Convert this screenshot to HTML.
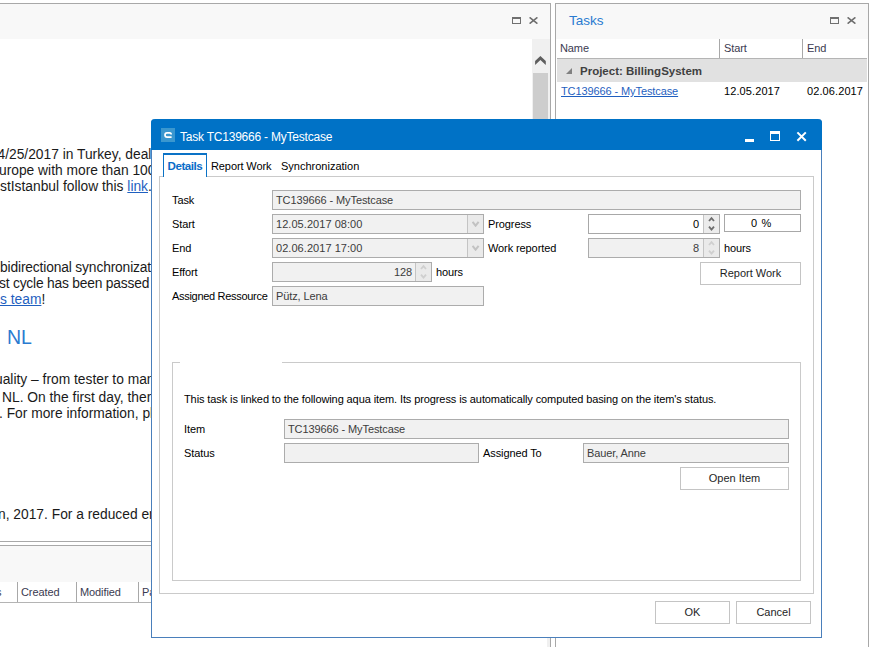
<!DOCTYPE html>
<html><head><meta charset="utf-8">
<style>
*{margin:0;padding:0;box-sizing:border-box}
html,body{width:870px;height:647px;overflow:hidden;background:#fff;font-family:"Liberation Sans",sans-serif;color:#1e1e1e}
.a{position:absolute}
.t{position:absolute;white-space:nowrap;line-height:1}
.doc{font-size:13.8px;color:#1a1a1a}

.sm{font-size:11px;letter-spacing:-0.1px;color:#000}
.v{color:#3c3c3c}
.lnk{color:#1f5fbf;text-decoration:underline}
.box{position:absolute;background:#f1f1f1;border:1px solid #acacac}
.btn{position:absolute;background:#fff;border:1px solid #c4c4c4;font-size:11px;text-align:center;line-height:21px;color:#1e1e1e}
</style></head><body>

<!-- ===== left document pane ===== -->
<div class="a" style="left:0;top:3px;width:551px;height:1px;background:#a8a8a8"></div>
<div class="a" style="left:0;top:4px;width:550px;height:35px;background:#f8f8f8"></div>
<div class="a" style="left:550px;top:3px;width:1px;height:644px;background:#a8a8a8"></div>
<!-- pane icons -->
<div class="a" style="left:512px;top:17px;width:9px;height:7px;border:1px solid #707070;border-top-width:2px"></div>
<svg class="a" style="left:529px;top:17px" width="9" height="7" viewBox="0 0 9 7"><path d="M0.6 0.3L8.4 6.7M8.4 0.3L0.6 6.7" stroke="#6e6e6e" stroke-width="1.5"/></svg>
<!-- scrollbar -->
<div class="a" style="left:532px;top:39px;width:18px;height:502px;background:#f0f0f0"></div>
<div class="a" style="left:533px;top:73px;width:15px;height:468px;background:#cdcdcd"></div>
<svg class="a" style="left:534px;top:55px" width="13" height="11" viewBox="0 0 13 11"><path d="M1.1 6.1L6.4 0.9L11.8 6.1L11.8 10L6.4 5.1L1.1 10Z" fill="#5e5e5e"/></svg>

<div class="t doc" style="left:-2.5px;top:148px">4/25/2017 in Turkey, dealing</div>
<div class="t doc" style="left:-1px;top:164px">urope with more than 100</div>
<div class="t doc" style="left:0px;top:180px">stIstanbul follow this <span class="lnk">link</span>.</div>
<div class="t doc" style="left:0px;top:260.5px;letter-spacing:-0.15px">bidirectional synchronization</div>
<div class="t doc" style="left:-1px;top:277px;letter-spacing:-0.2px">st cycle has been passed</div>
<div class="t doc" style="left:0px;top:293px"><span class="lnk">s team</span>!</div>
<div class="t" style="left:7px;top:328px;font-size:19.5px;color:#2a7bd0">NL</div>
<div class="t doc" style="left:-5px;top:373px">uality – from tester to management</div>
<div class="t doc" style="left:2px;top:391px">NL. On the first day, there</div>
<div class="t doc" style="left:-1px;top:407px">. For more information, please</div>
<div class="t doc" style="left:-2px;top:508px">n, 2017. For a reduced entry</div>

<!-- bottom grid in left pane -->
<div class="a" style="left:547px;top:546px;width:3px;height:101px;background:#f0f0f0"></div>
<div class="a" style="left:0;top:541px;width:550px;height:1px;background:#a8a8a8"></div>
<div class="a" style="left:0;top:545px;width:550px;height:1px;background:#a8a8a8"></div>
<div class="a" style="left:0;top:546px;width:550px;height:36px;background:#f8f8f8"></div>
<div class="a" style="left:0;top:602px;width:550px;height:1px;background:#b4b4b4"></div>
<div class="a" style="left:17px;top:582px;width:1px;height:20px;background:#a8a8a8"></div>
<div class="a" style="left:76px;top:582px;width:1px;height:20px;background:#a8a8a8"></div>
<div class="a" style="left:138px;top:582px;width:1px;height:20px;background:#a8a8a8"></div>
<div class="t sm" style="left:-4px;top:587px;color:#3a3a50">s</div>
<div class="t sm" style="left:21px;top:587px;color:#3a3a50">Created</div>
<div class="t sm" style="left:80px;top:587px;color:#3a3a50">Modified</div>
<div class="t sm" style="left:142px;top:587px;color:#3a3a50">Pa</div>

<!-- ===== right tasks pane ===== -->
<div class="a" style="left:555px;top:3px;width:314px;height:644px;border:1px solid #a8a8a8;border-bottom:none;background:#fff"></div>
<div class="a" style="left:556px;top:4px;width:312px;height:35px;background:#f8f8f8"></div>
<div class="t" style="left:569px;top:14px;font-size:13.5px;color:#2a7bd0">Tasks</div>
<div class="a" style="left:830px;top:17px;width:9px;height:7px;border:1px solid #707070;border-top-width:2px"></div>
<svg class="a" style="left:847px;top:17px" width="9" height="7" viewBox="0 0 9 7"><path d="M0.6 0.3L8.4 6.7M8.4 0.3L0.6 6.7" stroke="#6e6e6e" stroke-width="1.5"/></svg>
<div class="a" style="left:557px;top:58px;width:310px;height:1px;background:#b4b4b4"></div>
<div class="a" style="left:719px;top:39px;width:1px;height:19px;background:#a8a8a8"></div>
<div class="a" style="left:802px;top:39px;width:1px;height:19px;background:#a8a8a8"></div>
<div class="t sm" style="left:560px;top:43px;color:#3a3a50">Name</div>
<div class="t sm" style="left:724px;top:43px;color:#3a3a50">Start</div>
<div class="t sm" style="left:807px;top:43px;color:#3a3a50">End</div>
<div class="a" style="left:557px;top:59px;width:310px;height:23px;background:#e1e1e1"></div>
<svg class="a" style="left:565px;top:67px" width="8" height="8" viewBox="0 0 8 8"><path d="M7 1L7 7L1 7Z" fill="#808080"/></svg>
<div class="t" style="left:580px;top:66px;font-size:11.5px;font-weight:bold;color:#404040">Project: BillingSystem</div>
<div class="t sm lnk" style="left:561px;top:86px">TC139666 - MyTestcase</div>
<div class="t sm" style="left:724px;top:86px;letter-spacing:0.1px">12.05.2017</div>
<div class="t sm" style="left:807px;top:86px;letter-spacing:0.1px">02.06.2017</div>

<!-- ===== dialog ===== -->
<div class="a" id="dlg" style="left:151px;top:119px;width:671px;height:519px;border:1px solid #4a7fbb;border-top:none;background:#fff;border-radius:4px 4px 0 0">
</div>
<div class="a" style="left:151px;top:119px;width:671px;height:31px;background:#0072c6;border-radius:4px 4px 0 0"></div>
<div class="a" style="left:161px;top:128px;width:14px;height:14px;background:#3a97cf"></div>
<svg class="a" style="left:161px;top:128px" width="14" height="14" viewBox="0 0 14 14"><path d="M10.2 6.6Q10.2 4.9 8.6 4.9H6.1Q4 4.9 4 7Q4 9.1 6.1 9.1H10.6" stroke="#fff" stroke-width="1.7" fill="none"/></svg>
<div class="t" style="left:180px;top:131px;font-size:12px;letter-spacing:-0.22px;color:#fff">Task TC139666 - MyTestcase</div>
<div class="a" style="left:745px;top:138.5px;width:9px;height:3px;background:#fff"></div>
<div class="a" style="left:770px;top:131px;width:10px;height:10px;border:1.5px solid #fff;border-top-width:3px"></div>
<svg class="a" style="left:796px;top:131px" width="11" height="11" viewBox="0 0 11 11"><path d="M1.4 1.4L9.8 9.8M9.8 1.4L1.4 9.8" stroke="#fff" stroke-width="2"/></svg>

<!-- tabs -->
<div class="a" style="left:159px;top:176px;width:655px;height:418px;border:1px solid #cacaca"></div>
<div class="a" style="left:163px;top:153px;width:44px;height:24px;border:1px solid #0a72c6;border-top:2px solid #0a72c6;border-bottom:none;background:#fff"></div>
<div class="t" style="left:167.5px;top:160px;font-size:11.6px;font-weight:bold;color:#0a6cc8;letter-spacing:-0.45px">Details</div>
<div class="t sm" style="left:211px;top:161px">Report Work</div>
<div class="t sm" style="left:281px;top:161px;letter-spacing:0px">Synchronization</div>

<!-- form -->
<div class="t sm" style="left:172px;top:195px">Task</div>
<div class="box" style="left:272px;top:190px;width:529px;height:20px"></div>
<div class="t sm v" style="left:276px;top:195px">TC139666 - MyTestcase</div>

<div class="t sm" style="left:172px;top:219px">Start</div>
<div class="box" style="left:272px;top:214px;width:212px;height:20px"></div>
<div class="a" style="left:467px;top:215px;width:16px;height:18px;background:#eaeaea;border-left:1px solid #c4c4c4"></div>
<svg class="a" style="left:472px;top:221px" width="8" height="6" viewBox="0 0 8 6"><path d="M0.6 0.9L3.6 4.7L6.6 0.9" stroke="#c2c2c2" stroke-width="2" fill="none"/></svg>
<div class="t sm v" style="left:276px;top:219px;letter-spacing:0.05px">12.05.2017 08:00</div>

<div class="t sm" style="left:172px;top:243px">End</div>
<div class="box" style="left:272px;top:238px;width:212px;height:20px"></div>
<div class="a" style="left:467px;top:239px;width:16px;height:18px;background:#eaeaea;border-left:1px solid #c4c4c4"></div>
<svg class="a" style="left:472px;top:245px" width="8" height="6" viewBox="0 0 8 6"><path d="M0.6 0.9L3.6 4.7L6.6 0.9" stroke="#c2c2c2" stroke-width="2" fill="none"/></svg>
<div class="t sm v" style="left:276px;top:243px;letter-spacing:0.05px">02.06.2017 17:00</div>

<div class="t sm" style="left:172px;top:267px">Effort</div>
<div class="box" style="left:272px;top:262px;width:160px;height:20px"></div>
<div class="a" style="left:415px;top:263px;width:16px;height:18px;background:#eaeaea;border-left:1px solid #c4c4c4"></div>
<svg class="a" style="left:416px;top:263px" width="15" height="18" viewBox="0 0 15 18"><path d="M5 6L7.5 3.2L10 6M5 11.6L7.5 14.6L10 11.6" stroke="#cfcfcf" stroke-width="1.8" fill="none"/></svg>
<div class="t sm v" style="left:382px;top:267px;width:30px;text-align:right">128</div>
<div class="t sm" style="left:436px;top:267px">hours</div>

<div class="t sm" style="left:172px;top:291px;letter-spacing:-0.3px">Assigned Ressource</div>
<div class="box" style="left:272px;top:286px;width:212px;height:20px"></div>
<div class="t sm v" style="left:276px;top:291px">Pütz, Lena</div>

<div class="t sm" style="left:488px;top:219px">Progress</div>
<div class="box" style="left:588px;top:214px;width:132px;height:20px;background:#fff;border-color:#a8a8a8"></div>
<div class="a" style="left:703px;top:215px;width:16px;height:18px;background:#ececec;border-left:1px solid #c4c4c4"></div>
<svg class="a" style="left:704px;top:215px" width="15" height="18" viewBox="0 0 15 18"><path d="M5 6L7.5 3.2L10 6M5 11.6L7.5 14.6L10 11.6" stroke="#6e6e6e" stroke-width="1.8" fill="none"/></svg>
<div class="t sm" style="left:669px;top:219px;width:30px;text-align:right">0</div>
<div class="box" style="left:724px;top:214px;width:77px;height:18px;background:#fff;border-color:#a8a8a8"></div>
<div class="t sm" style="left:722.5px;top:218px;width:77px;text-align:center;word-spacing:1.5px">0 %</div>

<div class="t sm" style="left:488px;top:243px">Work reported</div>
<div class="box" style="left:588px;top:238px;width:132px;height:20px"></div>
<div class="a" style="left:703px;top:239px;width:16px;height:18px;background:#eaeaea;border-left:1px solid #c4c4c4"></div>
<svg class="a" style="left:704px;top:239px" width="15" height="18" viewBox="0 0 15 18"><path d="M5 6L7.5 3.2L10 6M5 11.6L7.5 14.6L10 11.6" stroke="#cfcfcf" stroke-width="1.8" fill="none"/></svg>
<div class="t sm v" style="left:669px;top:243px;width:30px;text-align:right">8</div>
<div class="t sm" style="left:724px;top:243px">hours</div>

<div class="btn" style="left:700px;top:262px;width:101px;height:23px">Report Work</div>

<!-- group box -->
<div class="a" style="left:172px;top:362px;width:629px;height:219px;border:1px solid #cacaca"></div>
<div class="a" style="left:180px;top:361px;width:102px;height:3px;background:#fff"></div>
<div class="t sm" style="left:184px;top:394px">This task is linked to the following aqua item. Its progress is automatically computed basing on the item's status.</div>
<div class="t sm" style="left:184px;top:424px">Item</div>
<div class="box" style="left:284px;top:419px;width:505px;height:20px"></div>
<div class="t sm v" style="left:288px;top:424px">TC139666 - MyTestcase</div>
<div class="t sm" style="left:184px;top:448px">Status</div>
<div class="box" style="left:284px;top:443px;width:195px;height:20px"></div>
<div class="t sm" style="left:483px;top:448px">Assigned To</div>
<div class="box" style="left:583px;top:443px;width:206px;height:20px"></div>
<div class="t sm v" style="left:587px;top:448px">Bauer, Anne</div>
<div class="btn" style="left:680px;top:467px;width:109px;height:23px">Open Item</div>

<div class="btn" style="left:655px;top:601px;width:75px;height:23px">OK</div>
<div class="btn" style="left:736px;top:601px;width:75px;height:23px">Cancel</div>

</body></html>
